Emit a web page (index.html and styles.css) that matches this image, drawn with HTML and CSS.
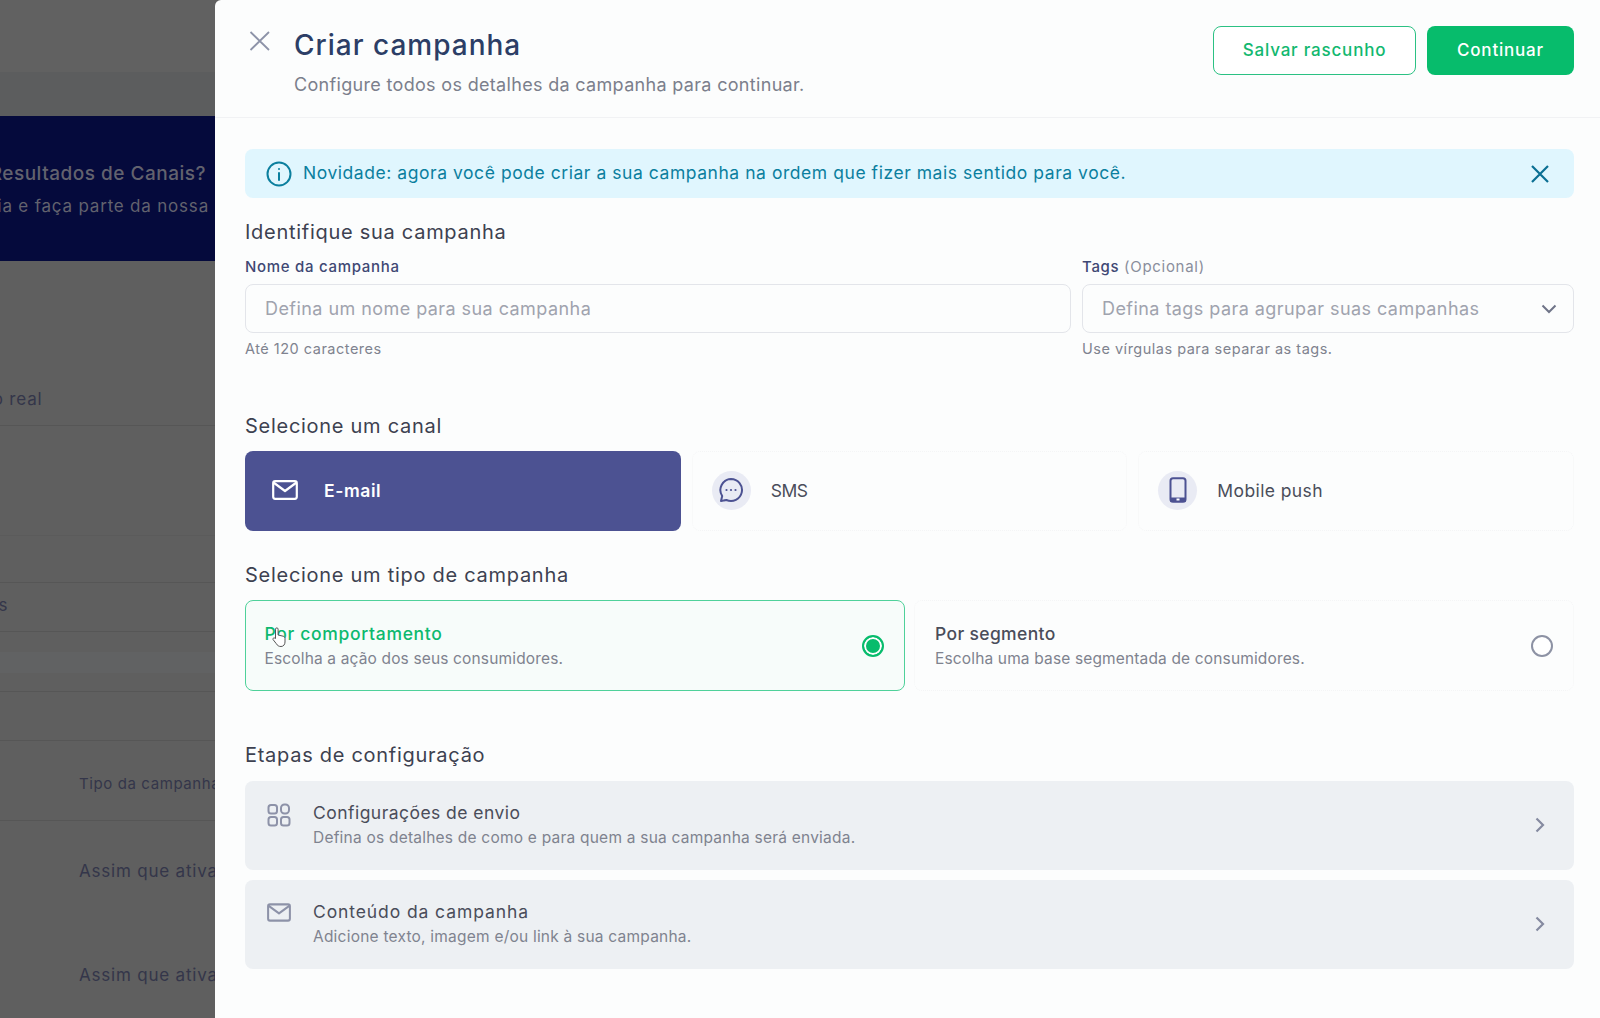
FILE: index.html
```html
<!DOCTYPE html>
<html lang="pt-BR">
<head>
    <meta charset="UTF-8">
    <title>Criar campanha</title>
    <link rel="stylesheet" href="styles.css">
</head>
<body>
    <!-- page behind the drawer -->
    <div class="backdrop">
        <div class="bg-top"></div>
        <div class="bg-strip"></div>
        <div class="bg-banner">
            <p class="bg-banner-title">Resultados de Canais?</p>
            <p class="bg-banner-text">Acesse a academia e faça parte da nossa</p>
        </div>
        <div class="bg-row bg-row-real">em tempo real</div>
        <div class="bg-row bg-row-a"></div>
        <div class="bg-row bg-row-b"></div>
        <div class="bg-row bg-row-c">Mensagens</div>
        <div class="bg-row bg-row-d"><div class="bg-band"></div></div>
        <div class="bg-row bg-row-b"></div>
        <div class="bg-row bg-row-head">Tipo da campanha</div>
        <div class="bg-row bg-row-tall">Assim que ativada</div>
        <div class="bg-row bg-row-tall">Assim que ativada</div>
    </div>

    <aside class="drawer">
        <header class="drawer-header">
            <button class="close-btn" aria-label="Fechar">
                <svg width="22" height="22" viewBox="0 0 22 22" fill="none" stroke="#8d93a8" stroke-width="1.8"><path d="M1.500 2 20 20M20 2 1.500 20"/></svg>
            </button>
            <div class="header-text">
                <h1>Criar campanha</h1>
                <p>Configure todos os detalhes da campanha para continuar.</p>
            </div>
            <div class="header-actions">
                <button class="btn btn-outline">Salvar rascunho</button>
                <button class="btn btn-primary">Continuar</button>
            </div>
        </header>

        <main class="drawer-body">
            <div class="alert">
                <svg class="alert-icon" width="26" height="26" viewBox="0 0 26 26" fill="none" stroke="#0b7f9e" stroke-width="2"><circle cx="13" cy="13" r="11.500"/><path d="M13 12v7" stroke-linecap="round"/><circle cx="13" cy="8" r="1" fill="#0b7f9e" stroke="none"/></svg>
                <span class="alert-text">Novidade: agora você pode criar a sua campanha na ordem que fizer mais sentido para você.</span>
                <svg class="alert-close" width="20" height="20" viewBox="0 0 20 20" fill="none" stroke="#0b6f93" stroke-width="2.200"><path d="M2 2 18 18M18 2 2 18"/></svg>
            </div>

            <h2 class="section-title title-identify">Identifique sua campanha</h2>
            <div class="fields">
                <div class="field">
                    <label>Nome da campanha</label>
                    <div class="input">Defina um nome para sua campanha</div>
                    <small>Até 120 caracteres</small>
                </div>
                <div class="field">
                    <label>Tags <span>(Opcional)</span></label>
                    <div class="input input-select">
                        Defina tags para agrupar suas campanhas
                        <svg width="16" height="10" viewBox="0 0 16 10" fill="none" stroke="#6f7488" stroke-width="2"><path d="M1.500 1.500 8 8l6.500-6.500"/></svg>
                    </div>
                    <small>Use vírgulas para separar as tags.</small>
                </div>
            </div>

            <h2 class="section-title title-channel">Selecione um canal</h2>
            <div class="channels">
                <div class="channel channel-active">
                    <svg width="26" height="20" viewBox="0 0 26 20" fill="none" stroke="#fff" stroke-width="2.200" stroke-linejoin="round"><rect x="1.200" y="1.200" width="23.600" height="17.600" rx="2"/><path d="M1.500 2.500 13 11 24.500 2.500"/></svg>
                    <span>E-mail</span>
                </div>
                <div class="channel">
                    <div class="channel-icon">
                        <svg width="26" height="26" viewBox="0 0 26 26" fill="none" stroke="#4c5292" stroke-width="2"><path d="M13 2a11 11 0 1 1-4.600 21L3 24l1.200-5A11 11 0 0 1 13 2Z" stroke-linejoin="round"/><circle cx="8.500" cy="13" r="1.100" fill="#4c5292" stroke="none"/><circle cx="13" cy="13" r="1.100" fill="#4c5292" stroke="none"/><circle cx="17.500" cy="13" r="1.100" fill="#4c5292" stroke="none"/></svg>
                    </div>
                    <span class="channel-sms">SMS</span>
                </div>
                <div class="channel">
                    <div class="channel-icon">
                        <svg width="18" height="26" viewBox="0 0 18 26" fill="none" stroke="#4c5292" stroke-width="2"><rect x="1.500" y="1.200" width="15" height="23.600" rx="2.500"/><rect x="1.500" y="20.500" width="15" height="4.300" fill="#4c5292" stroke="none"/><rect x="7.500" y="21.500" width="3" height="2" fill="#fff" stroke="none"/></svg>
                    </div>
                    <span>Mobile push</span>
                </div>
            </div>

            <h2 class="section-title title-type">Selecione um tipo de campanha</h2>
            <div class="types">
                <div class="type type-active">
                    <div class="type-text">
                        <h3>Por comportamento</h3>
                        <p>Escolha a ação dos seus consumidores.</p>
                    </div>
                    <span class="radio radio-on"></span>
                    <svg class="cursor" width="14" height="20" viewBox="0 0 14 20" fill="#fff" stroke="#555" stroke-width="1"><path d="M3.500 10V2.200a1.300 1.300 0 0 1 2.600 0V8l5 1.200c1.200.3 1.900 1.200 1.900 2.400V15c0 2.400-1.500 4.500-4 4.500-2.300 0-3.600-1-4.700-2.800L1 12.500c-.6-1 .9-2.300 2.500-1Z"/></svg>
                </div>
                <div class="type">
                    <div class="type-text">
                        <h3>Por segmento</h3>
                        <p>Escolha uma base segmentada de consumidores.</p>
                    </div>
                    <span class="radio"></span>
                </div>
            </div>

            <h2 class="section-title title-steps">Etapas de configuração</h2>
            <div class="steps">
                <div class="step">
                    <svg class="step-icon" width="24" height="24" viewBox="0 0 24 24" fill="none" stroke="#8d92a8" stroke-width="2"><rect x="1.500" y="2" width="8.500" height="8.500" rx="2.500"/><rect x="14" y="1.500" width="8" height="9" rx="3.500"/><rect x="1.500" y="14" width="8.500" height="8.500" rx="2.500"/><rect x="14" y="14" width="8.500" height="8.500" rx="2.500"/></svg>
                    <div class="step-text">
                        <h3>Configurações de envio</h3>
                        <p>Defina os detalhes de como e para quem a sua campanha será enviada.</p>
                    </div>
                    <svg class="chevron" width="10" height="16" viewBox="0 0 10 16" fill="none" stroke="#858aa0" stroke-width="2.200"><path d="M1.500 1.500 8 8l-6.500 6.500"/></svg>
                </div>
                <div class="step step-content">
                    <svg class="step-icon" width="24" height="19" viewBox="0 0 26 20" fill="none" stroke="#8d92a8" stroke-width="2.200" stroke-linejoin="round"><rect x="1.200" y="1.200" width="23.600" height="17.600" rx="2"/><path d="M1.500 2.500 13 11 24.500 2.500"/></svg>
                    <div class="step-text">
                        <h3>Conteúdo da campanha</h3>
                        <p>Adicione texto, imagem e/ou link à sua campanha.</p>
                    </div>
                    <svg class="chevron" width="10" height="16" viewBox="0 0 10 16" fill="none" stroke="#858aa0" stroke-width="2.200"><path d="M1.500 1.500 8 8l-6.500 6.500"/></svg>
                </div>
            </div>
        </main>
    </aside>
</body>
</html>
```

FILE: styles.css
```css
/* Global Styles */
* {
    box-sizing: border-box;
}

html, body {
    height: 100%;
}

body {
    margin: 0;
    overflow: hidden;
    font-family: 'Inter', 'Open Sans', sans-serif;
    background-color: #5f5f5f;
    color: #3d4150;
}

h1, h2, h3, p {
    margin: 0;
    font-weight: 400;
}

/* Page behind the drawer */
.backdrop {
    width: 215px;
    height: 100%;
    overflow: hidden;
    color: #34364a;
    font-size: 17px;
    letter-spacing: 0.8px;
}

.bg-top {
    height: 72px;
    background-color: #616161;
}

.bg-strip {
    height: 44px;
    background-color: #5c5d5e;
}

.bg-banner {
    display: flex;
    flex-direction: column;
    align-items: flex-end;
    height: 145px;
    padding: 46px 9px 0 0;
    background-color: #050a3c;
    color: #62626e;
    white-space: nowrap;
}

.bg-banner-title {
    font-size: 19px;
    font-weight: 500;
    letter-spacing: 0.5px;
}

.bg-banner-text {
    margin: 11px -3px 0 0;
}

.bg-row {
    border-bottom: 1px solid #565656;
    white-space: nowrap;
}

.bg-row-real {
    height: 165px;
    padding-top: 128px;
    margin-left: -83px;
}

.bg-row-a {
    height: 110px;
    border-bottom-color: #5b5b5b;
}

.bg-row-b {
    height: 47px;
}

.bg-row-c {
    height: 49px;
    padding-top: 12px;
    margin-left: -92px;
}

.bg-row-d {
    height: 60px;
    padding-top: 20px;
}

.bg-band {
    height: 21px;
    background-color: #616263;
}

.bg-row-b:nth-child(9) {
    height: 49px;
}

.bg-row-head {
    height: 80px;
    padding: 33px 0 0 79px;
    font-size: 15px;
    letter-spacing: 0.6px;
}

.bg-row-tall {
    height: 104px;
    padding: 40px 0 0 79px;
    border-bottom: none;
}

/* Drawer */
.drawer {
    position: fixed;
    top: 0;
    right: 0;
    bottom: 0;
    left: 215px;
    background-color: #fcfdfd;
    border-top-left-radius: 6px;
}

.drawer-header {
    display: flex;
    height: 118px;
    padding: 26px 26px 0 34px;
    border-bottom: 1px solid #f1f2f4;
}

.close-btn {
    width: 22px;
    height: 22px;
    margin: 4px 23px 0 0;
    padding: 0;
    border: none;
    background: none;
}

.header-text {
    flex: 1;
}

.header-text h1 {
    font-size: 28px;
    line-height: 38px;
    font-weight: 500;
    color: #2c3e66;
    letter-spacing: 1px;
}

.header-text p {
    margin-top: 8px;
    font-size: 18px;
    line-height: 26px;
    color: #7b7f8c;
    letter-spacing: 0.32px;
}

.header-actions {
    display: flex;
    gap: 11px;
}

.btn {
    height: 49px;
    padding: 0 0 2px;
    border-radius: 8px;
    font-family: inherit;
    font-size: 17px;
    font-weight: 500;
    letter-spacing: 0.8px;
}

.btn-outline {
    width: 203px;
    background-color: #fff;
    border: 1px solid #2bc183;
    color: #12b86f;
}

.btn-primary {
    width: 147px;
    background-color: #07bc6c;
    border: none;
    color: #fff;
}

.drawer-body {
    padding: 31px 26px 0 30px;
}

.alert {
    display: flex;
    align-items: center;
    height: 49px;
    padding: 0 24px 0 21px;
    border-radius: 8px;
    background-color: #e0f6fe;
    color: #0b7f9e;
}

.alert-text {
    flex: 1;
    margin: -2px 0 0 11px;
    font-size: 17.500px;
    letter-spacing: 0.55px;
}

.section-title {
    font-size: 20px;
    line-height: 28px;
    color: #3d4150;
    letter-spacing: 0.72px;
}

.title-identify {
    margin-top: 20px;
}

.title-channel {
    margin-top: 53px;
}

.title-type {
    margin-top: 30px;
}

.title-steps {
    margin-top: 50px;
}

/* Form fields */
.fields {
    display: flex;
    gap: 11px;
    margin-top: 10px;
}

.field {
    flex: 1;
    min-width: 0;
}

.field:first-child {
    flex: 0 0 826px;
}

.field label {
    display: block;
    font-size: 15px;
    line-height: 22px;
    font-weight: 500;
    color: #3f4874;
    letter-spacing: 0.7px;
}

.field label span {
    font-weight: 400;
    color: #8a8e9c;
}

.input {
    display: flex;
    align-items: center;
    justify-content: space-between;
    height: 49px;
    margin-top: 6px;
    padding: 0 16px 0 19px;
    border: 1px solid #e3e5ea;
    border-radius: 8px;
    font-size: 18px;
    color: #a0a3ae;
    letter-spacing: 0.44px;
}

.field small {
    display: block;
    margin-top: 6px;
    font-size: 14.500px;
    line-height: 20px;
    color: #7f838f;
    letter-spacing: 0.5px;
}

/* Channels */
.channels {
    display: grid;
    grid-template-columns: repeat(3, 1fr);
    gap: 11px;
    margin-top: 11px;
}

.channel {
    display: flex;
    align-items: center;
    height: 80px;
    padding: 0 0 2px 19px;
    border: 1px dotted #f4f5f6;
    border-radius: 8px;
    font-size: 17.500px;
    color: #4a4d5a;
    letter-spacing: 0.4px;
}

.channel span {
    margin-left: 20px;
}

.channel .channel-sms {
    letter-spacing: -0.5px;
}

.channel-active {
    padding-left: 27px;
    background-color: #4c5292;
    border: none;
    color: #fff;
    font-weight: 600;
    letter-spacing: 0.6px;
}

.channel-active span {
    margin-left: 26px;
}

.channel-icon {
    display: flex;
    align-items: center;
    justify-content: center;
    width: 39px;
    height: 39px;
    border-radius: 50%;
    background-color: #e9ebf4;
}

/* Campaign types */
.types {
    display: grid;
    grid-template-columns: 660px 1fr;
    gap: 9px;
    margin-top: 11px;
}

.type {
    position: relative;
    display: flex;
    align-items: center;
    justify-content: space-between;
    height: 91px;
    padding: 0 20px;
    border: 1px dotted #f4f5f6;
    border-radius: 8px;
}

.type-active {
    padding: 0 20px 0 18.500px;
    background-color: #f7fcfa;
    border: 1.500px solid #4fd19a;
}

.type h3 {
    font-size: 17.500px;
    line-height: 24px;
    font-weight: 500;
    color: #4a4d5a;
    letter-spacing: 0.35px;
}

.type-active h3 {
    color: #0cb96e;
    letter-spacing: 0.68px;
}

.type p {
    margin-top: 2px;
    font-size: 15.500px;
    line-height: 22px;
    color: #7f838f;
    letter-spacing: 0.15px;
}

.radio {
    width: 22px;
    height: 22px;
    border: 2px solid #8d92a4;
    border-radius: 50%;
    background-color: #fff;
}

.radio-on {
    border-color: #07bc6c;
    background-color: #07bc6c;
    box-shadow: inset 0 0 0 2px #fff;
}

/* Hand cursor over the selected card */
.cursor {
    position: absolute;
    top: 26px;
    left: 26px;
}

/* Steps */
.steps {
    display: flex;
    flex-direction: column;
    gap: 10px;
    margin-top: 12px;
}

.step {
    display: flex;
    align-items: flex-start;
    height: 89px;
    padding: 20px 29px 0 22px;
    border-radius: 8px;
    background-color: #edf0f3;
}

.step-icon {
    flex: none;
    margin-top: 2px;
}

.step-content .step-icon {
    margin-top: 3px;
}

.step-text {
    flex: 1;
    margin-left: 22px;
}

.step h3 {
    font-size: 17.500px;
    line-height: 24px;
    color: #4a4d5a;
    letter-spacing: 0.46px;
}

.step-content h3 {
    letter-spacing: 0.9px;
}

.step p {
    margin-top: 2px;
    font-size: 15.500px;
    line-height: 22px;
    color: #7f838f;
    letter-spacing: 0.22px;
}

.chevron {
    margin-top: 16px;
}
```
